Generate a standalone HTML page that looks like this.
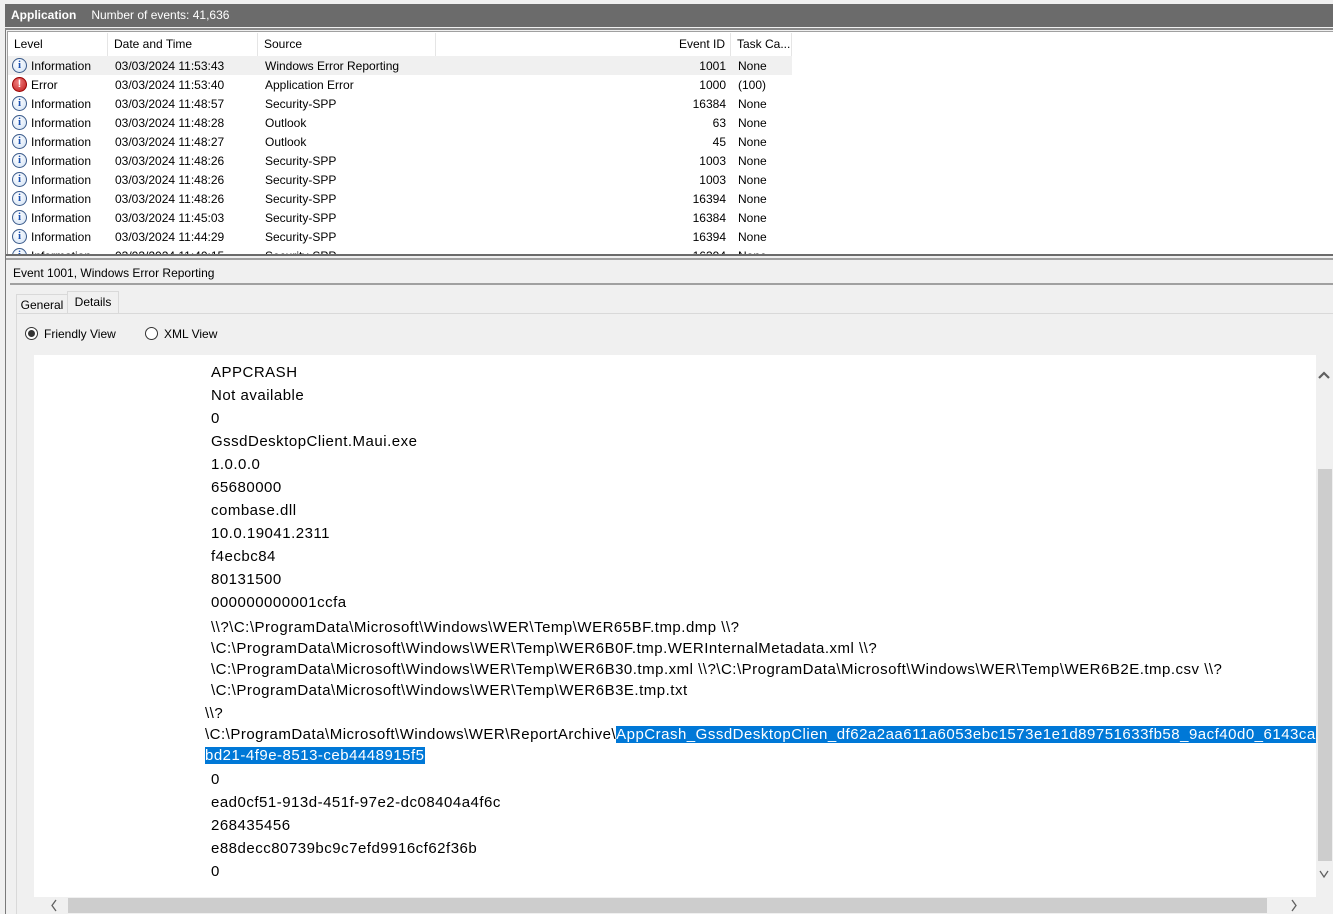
<!DOCTYPE html>
<html><head><meta charset="utf-8"><style>
*{margin:0;padding:0;box-sizing:border-box}
body{width:1333px;height:914px;overflow:hidden;background:#f0f0f0;font-family:"Liberation Sans",sans-serif;position:relative;color:#000}
.abs{position:absolute}
.title{left:5px;top:4px;width:1328px;height:23px;background:#6b6b6b;color:#fff;font-size:12px;line-height:23px}
.list{left:7px;top:31px;width:1326px;height:223px;background:#fff;border-left:1px solid #a0a0a0;border-top:1px solid #a0a0a0;overflow:hidden}
.hdr{position:absolute;top:1px;height:23px;font-size:12px;line-height:23px;border-right:1px solid #e5e5e5;padding-left:6px}
.row{position:absolute;left:0;height:19px;font-size:12px;line-height:21px;width:784px}
.row span{position:absolute;top:0}
.ic{position:absolute;left:4px;top:2px;width:15px;height:15px;border-radius:50%;border:1px solid #3a5a8a;background:radial-gradient(circle at 40% 35%,#fff,#cfe0f4);color:#1a50b0;font:bold 11px/13px "Liberation Serif",serif;text-align:center}
.ic.e{background:radial-gradient(circle at 40% 35%,#f08080,#c01818);border-color:#900;color:#fff;font:bold 11px/13px "Liberation Sans",sans-serif}
.d{position:absolute;left:211px;font-size:15px;white-space:nowrap;letter-spacing:0.5px}
.sel{background:#0078d7;color:#fff}
</style></head><body>
<div class="abs" style="left:0;top:0;width:5px;height:914px;background:#f0f0f0"></div>
<div class="abs" style="left:5px;top:28px;width:1px;height:886px;background:#7a7a7a"></div>
<div class="abs title"><b style="margin-left:6px">Application</b><span style="margin-left:15px">Number of events: 41,636</span></div>
<div class="abs" style="left:5px;top:28px;width:1328px;height:2px;background:#888"></div>
<div class="abs list">
<div class="hdr" style="left:0;width:100px">Level</div>
<div class="hdr" style="left:100px;width:150px">Date and Time</div>
<div class="hdr" style="left:250px;width:178px">Source</div>
<div class="hdr" style="left:428px;width:295px;text-align:right;padding-right:5px">Event ID</div>
<div class="hdr" style="left:723px;width:61px">Task Ca...</div>
<div class="row" style="top:24px;background:#f0f0f0"><div class="ic">i</div><span style="left:23px">Information</span><span style="left:107px">03/03/2024 11:53:43</span><span style="left:257px">Windows Error Reporting</span><span style="left:660px;width:58px;text-align:right">1001</span><span style="left:730px">None</span></div>
<div class="row" style="top:43px"><div class="ic e">!</div><span style="left:23px">Error</span><span style="left:107px">03/03/2024 11:53:40</span><span style="left:257px">Application Error</span><span style="left:660px;width:58px;text-align:right">1000</span><span style="left:730px">(100)</span></div>
<div class="row" style="top:62px"><div class="ic">i</div><span style="left:23px">Information</span><span style="left:107px">03/03/2024 11:48:57</span><span style="left:257px">Security-SPP</span><span style="left:660px;width:58px;text-align:right">16384</span><span style="left:730px">None</span></div>
<div class="row" style="top:81px"><div class="ic">i</div><span style="left:23px">Information</span><span style="left:107px">03/03/2024 11:48:28</span><span style="left:257px">Outlook</span><span style="left:660px;width:58px;text-align:right">63</span><span style="left:730px">None</span></div>
<div class="row" style="top:100px"><div class="ic">i</div><span style="left:23px">Information</span><span style="left:107px">03/03/2024 11:48:27</span><span style="left:257px">Outlook</span><span style="left:660px;width:58px;text-align:right">45</span><span style="left:730px">None</span></div>
<div class="row" style="top:119px"><div class="ic">i</div><span style="left:23px">Information</span><span style="left:107px">03/03/2024 11:48:26</span><span style="left:257px">Security-SPP</span><span style="left:660px;width:58px;text-align:right">1003</span><span style="left:730px">None</span></div>
<div class="row" style="top:138px"><div class="ic">i</div><span style="left:23px">Information</span><span style="left:107px">03/03/2024 11:48:26</span><span style="left:257px">Security-SPP</span><span style="left:660px;width:58px;text-align:right">1003</span><span style="left:730px">None</span></div>
<div class="row" style="top:157px"><div class="ic">i</div><span style="left:23px">Information</span><span style="left:107px">03/03/2024 11:48:26</span><span style="left:257px">Security-SPP</span><span style="left:660px;width:58px;text-align:right">16394</span><span style="left:730px">None</span></div>
<div class="row" style="top:176px"><div class="ic">i</div><span style="left:23px">Information</span><span style="left:107px">03/03/2024 11:45:03</span><span style="left:257px">Security-SPP</span><span style="left:660px;width:58px;text-align:right">16384</span><span style="left:730px">None</span></div>
<div class="row" style="top:195px"><div class="ic">i</div><span style="left:23px">Information</span><span style="left:107px">03/03/2024 11:44:29</span><span style="left:257px">Security-SPP</span><span style="left:660px;width:58px;text-align:right">16394</span><span style="left:730px">None</span></div>
<div class="row" style="top:214px"><div class="ic">i</div><span style="left:23px">Information</span><span style="left:107px">03/03/2024 11:40:15</span><span style="left:257px">Security-SPP</span><span style="left:660px;width:58px;text-align:right">16394</span><span style="left:730px">None</span></div>
</div>
<div class="abs" style="left:6px;top:254px;width:1327px;height:2px;background:#6b6b6b"></div>
<div class="abs" style="left:6px;top:258px;width:1327px;height:2px;background:#a0a0a0"></div>
<div class="abs" style="left:13px;top:266px;font-size:12px">Event 1001, Windows Error Reporting</div>
<div class="abs" style="left:10px;top:283px;width:1323px;height:2px;background:#a0a0a0"></div>
<div class="abs" style="left:16px;top:294px;width:52px;height:20px;border:1px solid #d9d9d9;border-bottom:none;font-size:12px;line-height:20px;text-align:center">General</div>
<div class="abs" style="left:67px;top:291px;width:52px;height:23px;border:1px solid #d9d9d9;border-bottom:none;background:#f0f0f0;font-size:12px;line-height:20px;text-align:center">Details</div>
<div class="abs" style="left:16px;top:313px;width:1317px;height:1px;background:#d9d9d9"></div>
<div class="abs" style="left:16px;top:313px;width:1px;height:601px;background:#d9d9d9"></div>
<div class="abs" style="left:25px;top:327px;width:13px;height:13px;border:1px solid #333;border-radius:50%;background:#fff"><div style="margin:2px;width:7px;height:7px;border-radius:50%;background:#333"></div></div>
<div class="abs" style="left:44px;top:327px;font-size:12px">Friendly View</div>
<div class="abs" style="left:145px;top:327px;width:13px;height:13px;border:1px solid #333;border-radius:50%;background:#fff"></div>
<div class="abs" style="left:164px;top:327px;font-size:12px">XML View</div>
<div class="abs" style="left:34px;top:355px;width:1282px;height:542px;background:#fff;overflow:hidden">
<div style="position:relative;left:-34px;top:-354px">
<div class="d" style="top:363px">APPCRASH</div>
<div class="d" style="top:386px">Not available</div>
<div class="d" style="top:409px">0</div>
<div class="d" style="top:432px">GssdDesktopClient.Maui.exe</div>
<div class="d" style="top:455px">1.0.0.0</div>
<div class="d" style="top:478px">65680000</div>
<div class="d" style="top:501px">combase.dll</div>
<div class="d" style="top:524px">10.0.19041.2311</div>
<div class="d" style="top:547px">f4ecbc84</div>
<div class="d" style="top:570px">80131500</div>
<div class="d" style="top:593px">000000000001ccfa</div>
<div class="d" style="top:618px">\\?\C:\ProgramData\Microsoft\Windows\WER\Temp\WER65BF.tmp.dmp \\?</div>
<div class="d" style="top:639px">\C:\ProgramData\Microsoft\Windows\WER\Temp\WER6B0F.tmp.WERInternalMetadata.xml \\?</div>
<div class="d" style="top:660px">\C:\ProgramData\Microsoft\Windows\WER\Temp\WER6B30.tmp.xml \\?\C:\ProgramData\Microsoft\Windows\WER\Temp\WER6B2E.tmp.csv \\?</div>
<div class="d" style="top:681px">\C:\ProgramData\Microsoft\Windows\WER\Temp\WER6B3E.tmp.txt</div>
<div class="d" style="top:704px;left:205px">\\?</div>
<div class="d" style="top:725px;left:205px">\C:\ProgramData\Microsoft\Windows\WER\ReportArchive\<span class="sel">AppCrash_GssdDesktopClien_df62a2aa611a6053ebc1573e1e1d89751633fb58_9acf40d0_6143cab1</span></div>
<div class="d" style="top:746px;left:205px"><span class="sel">bd21-4f9e-8513-ceb4448915f5</span></div>
<div class="d" style="top:770px">0</div>
<div class="d" style="top:793px">ead0cf51-913d-451f-97e2-dc08404a4f6c</div>
<div class="d" style="top:816px">268435456</div>
<div class="d" style="top:839px">e88decc80739bc9c7efd9916cf62f36b</div>
<div class="d" style="top:862px">0</div>
</div></div>
<div class="abs" style="left:1316px;top:355px;width:17px;height:542px;background:#f0f0f0"></div>
<div class="abs" style="left:1318px;top:469px;width:14px;height:392px;background:#cdcdcd"></div>
<svg class="abs" style="left:1317px;top:369px" width="14" height="12"><path d="M2 9 L7 4 L12 9" stroke="#606060" stroke-width="2.2" fill="none"/></svg>
<svg class="abs" style="left:1317px;top:868px" width="14" height="12"><path d="M3 3 L7 9 L11 3" stroke="#606060" stroke-width="1.3" fill="none"/></svg>
<div class="abs" style="left:34px;top:897px;width:1299px;height:17px;background:#f0f0f0"></div>
<div class="abs" style="left:68px;top:898px;width:1199px;height:15px;background:#cdcdcd"></div>
<svg class="abs" style="left:48px;top:898px" width="12" height="15"><path d="M8 2 L4 7.5 L8 13" stroke="#606060" stroke-width="1.3" fill="none"/></svg>
<svg class="abs" style="left:1288px;top:898px" width="12" height="15"><path d="M4 2 L8 7.5 L4 13" stroke="#606060" stroke-width="1.3" fill="none"/></svg>
</body></html>
